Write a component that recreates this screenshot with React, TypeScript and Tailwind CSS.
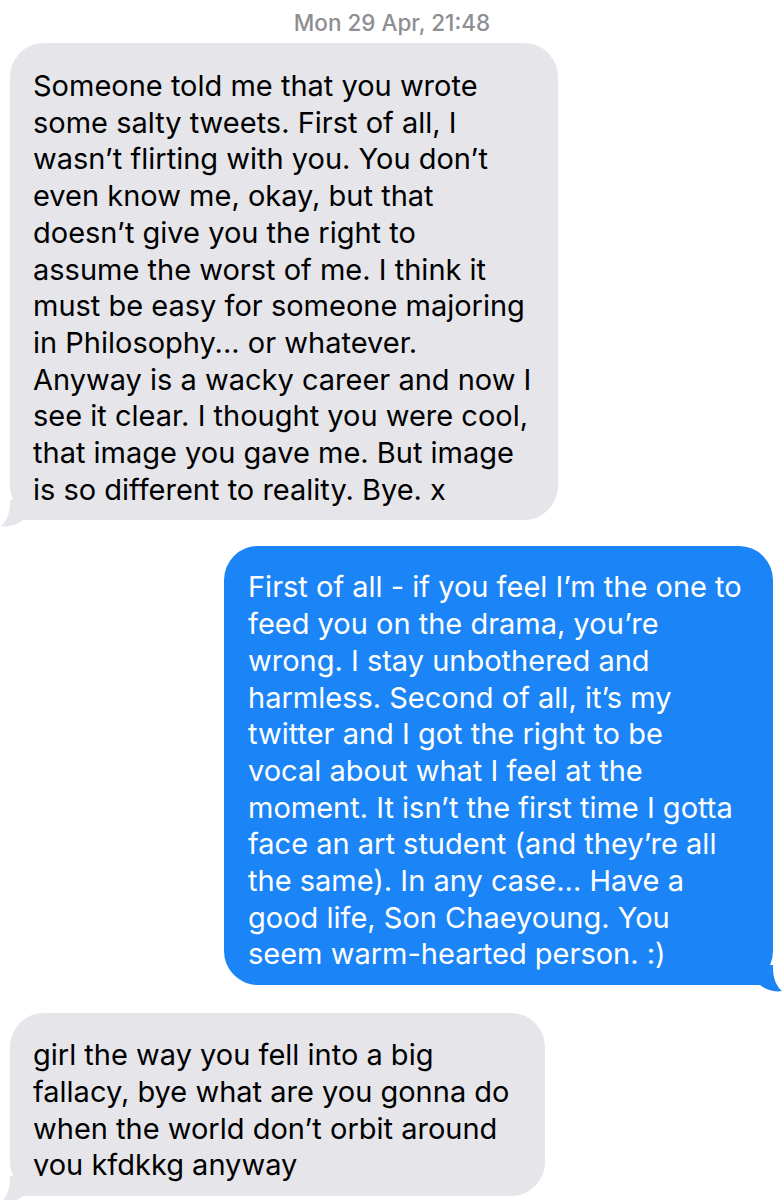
const FONT = "font-['Inter','Liberation_Sans',sans-serif]";

const incomingFirst = [
  "Someone told me that you wrote",
  "some salty tweets. First of all, I",
  "wasn’t flirting with you. You don’t",
  "even know me, okay, but that",
  "doesn’t give you the right to",
  "assume the worst of me. I think it",
  "must be easy for someone majoring",
  "in Philosophy... or whatever.",
  "Anyway is a wacky career and now I",
  "see it clear. I thought you were cool,",
  "that image you gave me. But image",
  "is so different to reality. Bye. x",
];

const outgoing = [
  "First of all - if you feel I’m the one to",
  "feed you on the drama, you’re",
  "wrong. I stay unbothered and",
  "harmless. Second of all, it’s my",
  "twitter and I got the right to be",
  "vocal about what I feel at the",
  "moment. It isn’t the first time I gotta",
  "face an art student (and they’re all",
  "the same). In any case... Have a",
  "good life, Son Chaeyoung. You",
  "seem warm-hearted person. :)",
];

const incomingSecond = [
  "girl the way you fell into a big",
  "fallacy, bye what are you gonna do",
  "when the world don’t orbit around",
  "you kfdkkg anyway",
];

function Tail({ color, side }: { color: string; side: "left" | "right" }) {
  return (
    <svg
      width="50"
      height="28"
      viewBox="0 0 50 28"
      className={
        side === "left"
          ? "absolute left-[-10px] bottom-[-8px]"
          : "absolute right-[-10px] bottom-[-8px] -scale-x-100"
      }
    >
      <path d="M10 0 L10 3 C10 14 6 22 1 26 C9 27.5 17 25 23 20 L50 20 L50 0 Z" fill={color} />
    </svg>
  );
}

function Bubble({
  lines,
  outgoing,
  className,
}: {
  lines: string[];
  outgoing?: boolean;
  className: string;
}) {
  return (
    <div
      className={`relative rounded-[34px] pb-[12px] text-[29px] leading-[36.7px] whitespace-nowrap ${
        outgoing ? "bg-[#1b85f7] text-white pl-[24px]" : "bg-[#e5e5ea] text-black pl-[23px]"
      } ${className}`}
    >
      {lines.map((l) => (
        <div key={l}>{l}</div>
      ))}
      <Tail color={outgoing ? "#1b85f7" : "#e5e5ea"} side={outgoing ? "right" : "left"} />
    </div>
  );
}

export default function App() {
  return (
    <div className={`w-[784px] h-[1200px] overflow-hidden bg-white ${FONT}`}>
      {/* timestamp */}
      <div className="pt-[9px] text-center text-[22.5px] leading-[28px] font-medium text-[#8e8e93]">
        Mon 29 Apr, 21:48
      </div>

      <div className="flex flex-col">
        <Bubble lines={incomingFirst} className="mt-[6px] ml-[10px] w-[548px] pt-[25px]" />
        <Bubble lines={outgoing} outgoing className="mt-[26px] ml-[224px] w-[549px] pt-[23px]" />
        <Bubble lines={incomingSecond} className="mt-[28px] ml-[10px] w-[535px] pt-[24px]" />
      </div>
    </div>
  );
}
